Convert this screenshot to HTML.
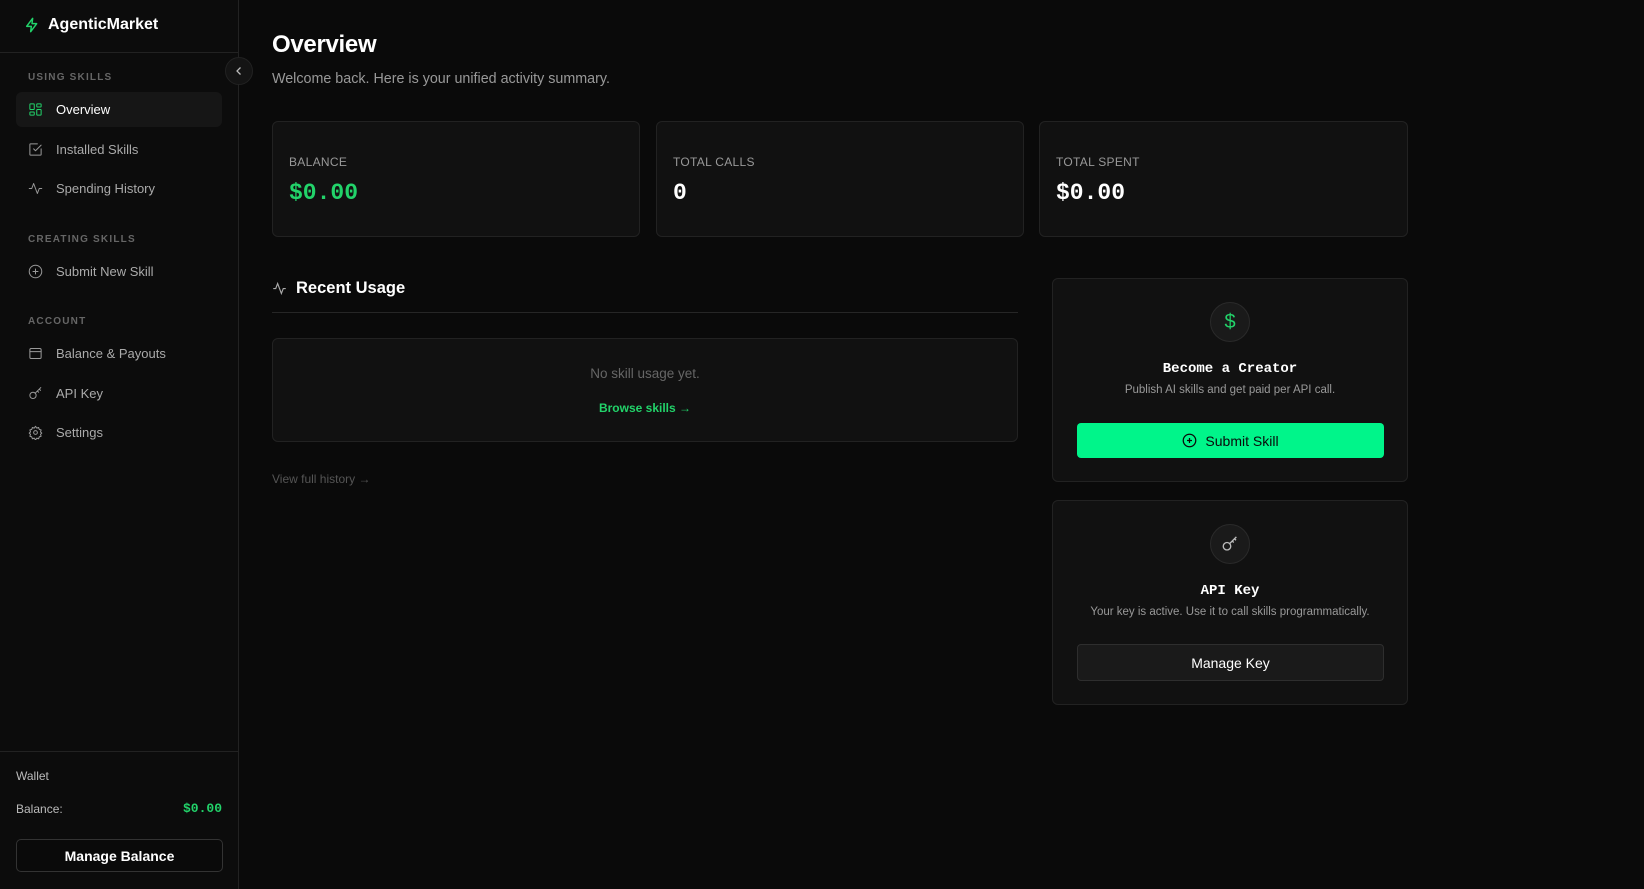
<!DOCTYPE html>
<html><head><meta charset="utf-8"><style>
*{box-sizing:border-box;margin:0;padding:0}
body{width:1644px;height:889px;background:#0a0a0a;font-family:"Liberation Sans",sans-serif;color:#e8e8e8;position:relative;overflow:hidden}
.a{position:absolute}
.side{left:0;top:0;width:239px;height:889px;background:#0c0c0c;border-right:1px solid #222}
.sec{left:28px;font-size:10px;font-weight:bold;letter-spacing:1.2px;color:#666}
.item{left:16px;width:206px;height:35px;display:flex;align-items:center;padding-left:12px;font-size:13px;color:#aaa;border-radius:6px}
.item svg{width:15px;height:15px;margin-right:13px;fill:none;stroke:#999;stroke-width:1.6;stroke-linecap:round;stroke-linejoin:round}
.card{background:#111;border:1px solid #222;border-radius:6px}
.lbl{font-size:12px;color:#999;letter-spacing:.3px}
.val{font-family:"Liberation Mono",monospace;font-size:23px;font-weight:bold}
.mono{font-family:"Liberation Mono",monospace;font-weight:bold;font-size:14px;color:#fff}
.circ{width:40px;height:40px;border-radius:50%;background:#1a1a1a;border:1px solid #2a2a2a;display:flex;align-items:center;justify-content:center}
</style></head><body>
<div class="a side">
 <div class="a" style="left:24px;top:16px;display:flex;align-items:center;font-size:16px;font-weight:bold;color:#fff">
  <svg width="16" height="18" viewBox="0 0 24 24" fill="none" stroke="#22d36a" stroke-width="2.2" stroke-linejoin="round" style="margin-right:8px"><path d="M13 2 4 14h7l-1 8 9-12h-7z"/></svg>AgenticMarket</div>
 <div class="a" style="left:0;top:52px;width:239px;border-top:1px solid #222"></div>
 <div class="a sec" style="top:72px">USING SKILLS</div>
 <div class="a item" style="top:92px;background:#161616;color:#fff"><svg viewBox="0 0 24 24" style="stroke:#22d36a"><rect x="3" y="3" width="7" height="9" rx="1"/><rect x="14" y="3" width="7" height="5" rx="1"/><rect x="14" y="12" width="7" height="9" rx="1"/><rect x="3" y="16" width="7" height="5" rx="1"/></svg>Overview</div>
 <div class="a item" style="top:132px"><svg viewBox="0 0 24 24"><path d="M21 11v9a1 1 0 0 1-1 1H4a1 1 0 0 1-1-1V4a1 1 0 0 1 1-1h11"/><path d="m9 11 3 3 9-9"/></svg>Installed Skills</div>
 <div class="a item" style="top:171px"><svg viewBox="0 0 24 24"><path d="M2 12h4l3-8 6 16 3-8h4"/></svg>Spending History</div>
 <div class="a sec" style="top:234px">CREATING SKILLS</div>
 <div class="a item" style="top:254px"><svg viewBox="0 0 24 24"><circle cx="12" cy="12" r="10"/><path d="M12 8v8M8 12h8"/></svg>Submit New Skill</div>
 <div class="a sec" style="top:316px">ACCOUNT</div>
 <div class="a item" style="top:336px"><svg viewBox="0 0 24 24"><rect x="3" y="4" width="18" height="16" rx="2"/><path d="M3 9h18"/></svg>Balance &amp; Payouts</div>
 <div class="a item" style="top:376px"><svg viewBox="0 0 24 24"><circle cx="8" cy="15" r="5"/><path d="m11.5 11.5 9-9M18 5l2 2M15 8l2 2"/></svg>API Key</div>
 <div class="a item" style="top:415px"><svg viewBox="0 0 24 24"><circle cx="12" cy="12" r="3"/><path d="M12 2l2 3 3-1 1 3 3 1-1 3 2 2-2 2 1 3-3 1-1 3-3-1-2 3-2-3-3 1-1-3-3-1 1-3-2-2 2-2-1-3 3-1 1-3 3 1z"/></svg>Settings</div>
 <div class="a" style="left:0;top:751px;width:239px;border-top:1px solid #222"></div>
 <div class="a" style="left:16px;top:769px;font-size:12px;color:#bbb">Wallet</div>
 <div class="a" style="left:16px;top:802px;font-size:12px;color:#bbb">Balance:</div>
 <div class="a" style="right:16px;top:801px;font-family:'Liberation Mono',monospace;font-weight:bold;font-size:13px;color:#22d36a">$0.00</div>
 <div class="a" style="left:16px;top:839px;width:207px;height:33px;border:1px solid #333;border-radius:5px;background:#0a0a0a;display:flex;align-items:center;justify-content:center;font-size:14px;font-weight:bold;color:#fff">Manage Balance</div>
</div>
<div class="a" style="left:225px;top:57px;width:28px;height:28px;border-radius:50%;background:#141414;border:1px solid #222;display:flex;align-items:center;justify-content:center"><svg width="12" height="12" viewBox="0 0 24 24" fill="none" stroke="#bbb" stroke-width="2.5"><path d="m15 5-7 7 7 7"/></svg></div>

<div class="a" style="left:272px;top:31px;font-size:24px;font-weight:bold;color:#fff;letter-spacing:-.3px">Overview</div>
<div class="a" style="left:272px;top:71px;font-size:14.3px;color:#999">Welcome back. Here is your unified activity summary.</div>

<div class="a card" style="left:272px;top:121px;width:368px;height:116px"><div class="a lbl" style="left:16px;top:33px">BALANCE</div><div class="a val" style="left:16px;top:58px;color:#22d36a">$0.00</div></div>
<div class="a card" style="left:656px;top:121px;width:368px;height:116px"><div class="a lbl" style="left:16px;top:33px">TOTAL CALLS</div><div class="a val" style="left:16px;top:58px;color:#fff">0</div></div>
<div class="a card" style="left:1039px;top:121px;width:369px;height:116px"><div class="a lbl" style="left:16px;top:33px">TOTAL SPENT</div><div class="a val" style="left:16px;top:58px;color:#fff">$0.00</div></div>

<svg class="a" style="left:272px;top:281px" width="15" height="15" viewBox="0 0 24 24" fill="none" stroke="#aaa" stroke-width="1.8"><path d="M2 12h4l3-8 6 16 3-8h4"/></svg>
<div class="a" style="left:296px;top:279px;font-size:16.5px;font-weight:bold;color:#fff">Recent Usage</div>
<div class="a" style="left:272px;top:312px;width:746px;border-top:1px solid #262626"></div>
<div class="a card" style="left:272px;top:338px;width:746px;height:104px">
 <div class="a" style="left:0;width:100%;top:27px;text-align:center;font-size:13.5px;color:#666">No skill usage yet.</div>
 <div class="a" style="left:0;width:100%;top:62px;text-align:center;font-size:12px;font-weight:bold;color:#22d36a">Browse skills →</div>
</div>
<div class="a" style="left:272px;top:472px;font-size:12px;color:#555">View full history →</div>

<div class="a card" style="left:1052px;top:278px;width:356px;height:204px">
 <div class="a circ" style="left:157px;top:23px"><span style="color:#22d36a;font-size:20px">$</span></div>
 <div class="a mono" style="left:0;width:100%;top:82px;text-align:center">Become a Creator</div>
 <div class="a" style="left:0;width:100%;top:105px;text-align:center;font-size:11.5px;color:#999">Publish AI skills and get paid per API call.</div>
 <div class="a" style="left:24px;top:144px;width:307px;height:35px;background:#00f58a;border-radius:4px;display:flex;align-items:center;justify-content:center;font-size:14px;color:#0a0a0a"><svg width="15" height="15" viewBox="0 0 24 24" fill="none" stroke="#0a0a0a" stroke-width="2" style="margin-right:8px"><circle cx="12" cy="12" r="10"/><path d="M12 8v8M8 12h8"/></svg>Submit Skill</div>
</div>
<div class="a card" style="left:1052px;top:500px;width:356px;height:205px">
 <div class="a circ" style="left:157px;top:23px"><svg width="18" height="18" viewBox="0 0 24 24" fill="none" stroke="#bbb" stroke-width="1.8"><circle cx="8" cy="15" r="5"/><path d="m11.5 11.5 9-9M18 5l2 2M15 8l2 2"/></svg></div>
 <div class="a mono" style="left:0;width:100%;top:82px;text-align:center">API Key</div>
 <div class="a" style="left:0;width:100%;top:105px;text-align:center;font-size:11.5px;color:#999">Your key is active. Use it to call skills programmatically.</div>
 <div class="a" style="left:24px;top:143px;width:307px;height:37px;background:#1a1a1a;border:1px solid #2e2e2e;border-radius:4px;display:flex;align-items:center;justify-content:center;font-size:14px;color:#fff">Manage Key</div>
</div>
</body></html>
